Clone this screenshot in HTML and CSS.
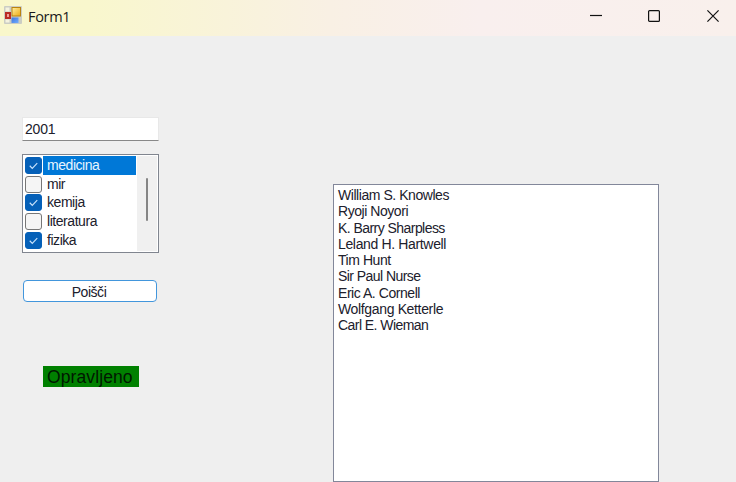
FILE: index.html
```html
<!DOCTYPE html>
<html lang="sl">
<head>
<meta charset="utf-8">
<title>Form1</title>
<link rel="stylesheet" href="styles.css">
</head>
<body>
<header class="titlebar">
  <svg class="app-icon" width="18" height="18" viewBox="0 0 18 18">
    <defs>
      <linearGradient id="gold" x2="1" y2="1"><stop offset="0" stop-color="#fff0a0"/><stop offset="1" stop-color="#eda812"/></linearGradient>
      <linearGradient id="blue" x2="1" y2="1"><stop offset="0" stop-color="#3c74dc"/><stop offset="1" stop-color="#73adff"/></linearGradient>
    </defs>
    <rect width="18" height="18" rx="1" fill="#cbcdc4"/>
    <path d="M1.500 1.500h4v4h-4zM1.500 13.500h4v3h-4z" fill="#f5f3df"/>
    <rect x="1" y="6" width="6" height="7" fill="#b92b24"/>
    <rect x="3" y="8" width="2" height="3" fill="#f1a097"/>
    <rect x="8" y="1.500" width="8.500" height="8.500" fill="url(#gold)" stroke="#b98310"/>
    <rect x="7.500" y="11.500" width="7" height="5.500" fill="url(#blue)"/>
  </svg>
  <h1 class="title">Form1</h1>
  <div class="controls">
    <svg width="12" height="12" viewBox="0 0 12 12"><path d="M0 5.500h12"/></svg>
    <svg width="12" height="12" viewBox="0 0 12 12"><rect x=".6" y=".6" width="10.800" height="10.800" rx="1"/></svg>
    <svg width="12" height="12" viewBox="0 0 12 12"><path d="M.4.4l11.200 11.200M11.600.4L.4 11.600"/></svg>
  </div>
</header>
<main class="form">
  <section class="query">
    <div class="year">2001</div>
    <div class="checklist">
      <ul class="options">
        <li class="option selected"><svg class="box on" viewBox="0 0 16 16"><path d="M4 8.300l2.700 2.700 5.300-5.500"/></svg><span class="name">medicina</span></li>
        <li class="option"><svg class="box" viewBox="0 0 16 16"></svg><span class="name">mir</span></li>
        <li class="option"><svg class="box on" viewBox="0 0 16 16"><path d="M4 8.300l2.700 2.700 5.300-5.500"/></svg><span class="name">kemija</span></li>
        <li class="option"><svg class="box" viewBox="0 0 16 16"></svg><span class="name">literatura</span></li>
        <li class="option"><svg class="box on" viewBox="0 0 16 16"><path d="M4 8.300l2.700 2.700 5.300-5.500"/></svg><span class="name">fizika</span></li>
      </ul>
      <div class="scrollbar"><div class="thumb"></div></div>
    </div>
    <button class="search">Poišči</button>
    <div class="status">Opravljeno</div>
  </section>
  <ul class="results">
    <li>William S. Knowles</li>
    <li>Ryoji Noyori</li>
    <li class="tight">K. Barry Sharpless</li>
    <li class="loose">Leland H. Hartwell</li>
    <li>Tim Hunt</li>
    <li class="tight">Sir Paul Nurse</li>
    <li>Eric A. Cornell</li>
    <li class="loose">Wolfgang Ketterle</li>
    <li class="tight">Carl E. Wieman</li>
  </ul>
</main>
</body>
</html>
```
FILE: styles.css
```css
* { box-sizing: border-box; }
body {
  margin: 0;
  width: 736px;
  height: 482px;
  overflow: hidden;
  display: flex;
  flex-direction: column;
  background: #efefef;
  color: #20202c;
  font: 14px "Liberation Sans", Arial, sans-serif;
}
ul { margin: 0; padding: 0; list-style: none; }
.titlebar {
  height: 36px;
  flex: none;
  display: flex;
  align-items: center;
  padding: 0 17px 5px 4px;
  background: linear-gradient(90deg, #f9f7cb 0, #f9f7cd 90px, #f9f0e4 330px, #f9efee 480px, #f9f0ec 736px);
}
.app-icon { margin-top: -1px; }
.title {
  margin: 1px 0 0 6px;
  font: 14.5px "Open Sans", "Noto Sans", sans-serif;
  letter-spacing: -0.3px;
  color: #1a1a1a;
}
.controls { display: flex; gap: 46.500px; margin-left: auto; }
.controls svg { fill: none; stroke: #111; stroke-width: 1.2; }
.controls svg:nth-child(2) { margin: 0 .5px 0 -.5px; }
.form { display: flex; flex: 1; align-items: flex-start; }
.query { width: 333px; padding: 81px 0 0 22px; }
.year {
  width: 137px;
  height: 24px;
  padding: 0 2px;
  line-height: 22px;
  letter-spacing: -0.2px;
  background: #fff;
  border: 1px solid #e8e8e8;
  border-bottom-color: #888;
}
.checklist {
  display: flex;
  width: 137px;
  height: 99px;
  margin-top: 13px;
  padding: 1px;
  background: #fff;
  border: 1px solid #80858f;
}
.options { width: 113px; padding: 0 1px; }
.option { display: flex; align-items: center; height: 18.700px; }
.box {
  width: 17px;
  height: 17px;
  flex: none;
  border: 1px solid #777;
  border-radius: 3px;
  background: #f5f5f5;
  fill: none;
  stroke: #c6e0fa;
  stroke-width: 1.3;
}
.box.on { border-color: #0560b8; background: #0560b8; }
.name {
  margin-left: 1px;
  padding-left: 4px;
  flex: 1;
  line-height: 18.700px;
  letter-spacing: -0.45px;
}
.selected .name { background: #0078d7; color: #e8f5ff; }
.scrollbar { flex: 1; padding: 22px 0 0 9px; background: #f0f0f0; }
.thumb { width: 2px; height: 43px; border-radius: 1px; background: #858585; }
.search {
  display: block;
  width: 134px;
  height: 22px;
  margin: 27px 0 0 1px;
  padding: 2px 2px 0 0;
  border: 1.500px solid #4296dc;
  border-radius: 4px;
  background: #fff;
  color: inherit;
  font: inherit;
  letter-spacing: -0.45px;
  line-height: 18px;
}
.status {
  width: 96px;
  height: 21px;
  margin: 64px 0 0 21px;
  padding-left: 4px;
  background: #008000;
  color: #001800;
  font-size: 17.500px;
  letter-spacing: 0.1px;
  line-height: 23px;
}
.results {
  width: 326px;
  height: 298px;
  margin-top: 148px;
  padding: 2px 4px;
  background: #fff;
  border: 1px solid #82879a;
  letter-spacing: -0.45px;
}
.results li { height: 16.300px; line-height: 16.300px; }
.results .tight { letter-spacing: -0.55px; }
.results .loose { letter-spacing: -0.35px; }
```
